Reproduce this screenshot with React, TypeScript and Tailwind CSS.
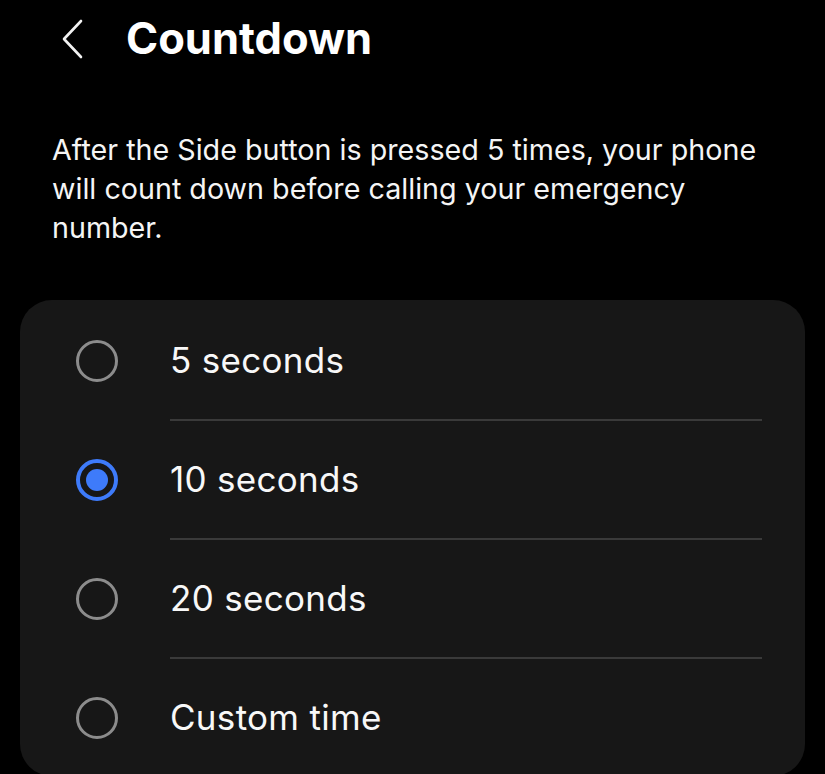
import { useState } from 'react';

const options = ['5 seconds', '10 seconds', '20 seconds', 'Custom time'];

function Radio({ checked }: { checked: boolean }) {
  if (checked) {
    return (
      <div className="w-[42px] h-[42px] rounded-full border-[4px] border-[#3e7bfa] flex items-center justify-center">
        <div className="w-[22px] h-[22px] rounded-full bg-[#3e7bfa]" />
      </div>
    );
  }
  return <div className="w-[42px] h-[42px] rounded-full border-[3px] border-[#8c8c8c]" />;
}

export default function App() {
  const [selected, setSelected] = useState(1);

  return (
    <div className="w-[825px] h-[774px] bg-black text-white overflow-hidden font-['Inter',sans-serif]">
      <div className="flex items-center h-[78px] pl-[60px]">
        <svg width="26" height="40" viewBox="0 0 26 40" fill="none" stroke="#f2f2f2" strokeWidth="2.6" strokeLinecap="round" strokeLinejoin="round">
          <path d="M21 2 L4 20 L21 38" />
        </svg>
        <h1 className="ml-[40px] text-[43.5px] font-bold">Countdown</h1>
      </div>

      <p className="mt-[52px] px-[52px] text-[28.7px] leading-[39px] text-[#f5f5f5]">
        After the Side button is pressed 5 times, your phone will count down before calling your emergency number.
      </p>

      <div className="mt-[53px] mx-[20px] bg-[#171717] rounded-[32px] pt-[2px]">
        {options.map((label, i) => (
          <div key={label} onClick={() => setSelected(i)} className="flex flex-col">
            <div className="flex items-center h-[117px]">
              <div className="w-[150px] pl-[56px]">
                <Radio checked={selected === i} />
              </div>
              <span className="text-[35px] tracking-[0.3px] text-[#f8f8f8]">{label}</span>
            </div>
            {i < options.length - 1 && <div className="ml-[150px] mr-[43px] h-[2px] bg-[#3a3a3a]" />}
          </div>
        ))}
      </div>
    </div>
  );
}
